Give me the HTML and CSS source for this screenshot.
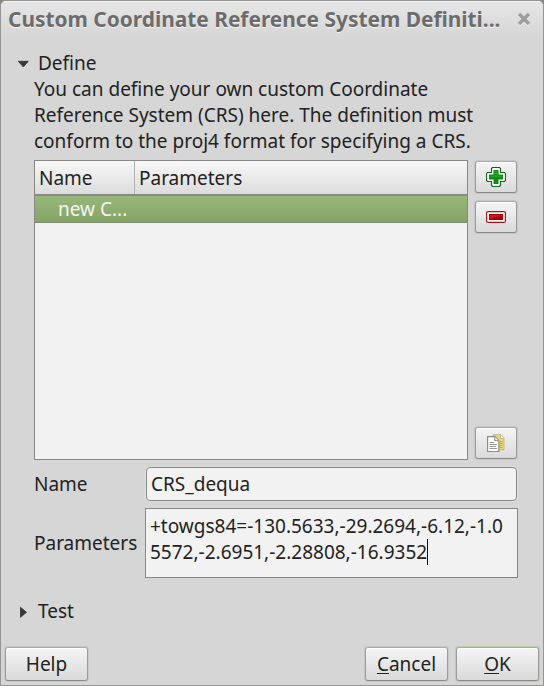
FILE: index.html
```html
<!DOCTYPE html>
<html lang="en">
<head>
<meta charset="utf-8">
<title>Custom Coordinate Reference System Definition</title>
<link rel="stylesheet" href="styles.css">
</head>
<body>
<div class="dialog">
  <header class="titlebar">
    <h1 class="title">Custom Coordinate Reference System Definiti...</h1>
    <svg class="close" width="14" height="14" viewBox="0 0 14 14"><path class="close-light" d="M2 3l10 10M12 3L2 13"/><path class="close-dark" d="M2 2l10 10M12 2L2 12"/></svg>
  </header>
  <main class="content">
    <div class="section-head">
      <svg class="arrow" width="12" height="12" viewBox="0 0 12 12"><path d="M.3 4.300h10L5.300 10z"/></svg>
      <span class="define-label">Define</span>
    </div>
    <p class="intro"><span class="line l1">You can define your own custom Coordinate</span><span class="line l2">Reference System (CRS) here. The definition must</span><span class="line l3">conform to the proj4 format for specifying a CRS.</span></p>
    <div class="list-area">
      <div class="table">
        <div class="thead"><span class="th th-name">Name</span><span class="th">Parameters</span></div>
        <div class="row">new C...</div>
      </div>
      <div class="tools">
        <div class="button tool">
          <svg width="20" height="20" viewBox="0 0 20 20"><path d="M6.5.5h7l1 1v4h4l1 1v7l-1 1h-4v4l-1 1h-7l-1-1v-4h-4l-1-1v-7l1-1h4v-4z" fill="#fff" stroke="#12661d" stroke-width="1.2"/><path d="M7.5 3h5v4.500H17v5h-4.500V17h-5v-4.500H3v-5h4.500z" fill="#118a13"/><path d="M8.500 4h3v4.500H16v1.500H4V8.500h4.500z" fill="#27a028"/></svg>
        </div>
        <div class="button tool">
          <svg width="20" height="20" viewBox="0 0 20 20"><rect x=".6" y="4.600" width="18.800" height="10.800" rx="1.500" fill="#fff" stroke="#a51217" stroke-width="1.200"/><path d="M3 7h14v6H3z" fill="#a90003"/><path d="M4 8h12L4 12z" fill="#c51c1f"/></svg>
        </div>
        <div class="button tool copy">
          <svg width="18" height="18" viewBox="0 0 18 18"><path d="M6 .7h8l3 3v12H6z" fill="#eddb69" stroke="#bdb791"/><path d="M13.500 1v3.500H17" fill="#fffbe0" stroke="#bdb791"/><path d="M13 7.500h2.500M13 9.500h2.500M13 11.500h2.500M13 13.500h2.500" stroke="#bca957"/><path d="M.6 2.600h7.400l3.900 3.900v11H.6z" fill="#fff" stroke="#8a8c88" stroke-width="1.200"/><path d="M7.700 2.700v4h4" fill="#eee" stroke="#8a8c88"/><path d="M2.500 8.500h4.500M2.500 10.500H10M2.500 12.500H9M2.500 14.500H10" stroke="#999b98"/></svg>
        </div>
      </div>
    </div>
    <div class="form">
      <label class="name-label">Name</label>
      <div class="input">CRS_dequa</div>
      <label class="param-label">Parameters</label>
      <div class="textarea"><span class="line">+towgs84=-130.5633,-29.2694,-6.12,-1.0</span><span class="line">5572,-2.6951,-2.28808,-16.9352<i class="caret"></i></span></div>
    </div>
    <div class="section-head test">
      <svg class="arrow" width="12" height="12" viewBox="0 0 12 12"><path d="M2.500 2.300v10L8.500 7.300z"/></svg>
      <span>Test</span>
    </div>
  </main>
  <footer class="footer">
    <div class="button action help">Help</div>
    <div class="button action"><span class="cancel-text"><span class="key">C</span>ancel</span></div>
    <div class="button action default"><span><span class="key">O</span>K</span></div>
  </footer>
</div>
</body>
</html>
```
FILE: styles.css
```css
* { box-sizing: border-box; }
body {
  margin: 0;
  background: #858585;
  font: 19px/26px "Noto Sans", sans-serif;
  color: #222;
}
.dialog {
  width: 544px;
  height: 686px;
  border: 1px solid #949494;
  border-radius: 6px 6px 0 0;
  background: #d6d6d6;
  display: flex;
  flex-direction: column;
  overflow: hidden;
}
.titlebar {
  height: 36px;
  flex: none;
  padding: 0 12px 0 7px;
  display: flex;
  align-items: center;
  justify-content: space-between;
  background: linear-gradient(#e6e6e6, #d6d6d6);
  border-top: 1px solid #f3f3f3;
}
.title {
  margin: 0 0 2px;
  font-size: 20.89px;
  line-height: 36px;
  font-weight: 700;
  color: #6c6c6c;
  text-shadow: 0 1px 0 #f4f4f4;
  white-space: nowrap;
}
.close { fill: none; stroke-width: 3.4; margin-bottom: 2px; }
.close-dark { stroke: #9c9c9c; }
.close-light { stroke: #f0f0f0; }
.content { padding: 13px 25px 0 17px; }
.section-head { display: flex; align-items: center; height: 26px; }
.arrow { width: 12px; margin-right: 8px; overflow: visible; fill: #3a3a3a; stroke: #222; stroke-width: .7; }
.intro { margin: 0 0 6px 16px; }
.line { display: block; white-space: nowrap; }
.list-area { display: flex; gap: 7px; margin-left: 16px; height: 300px; }
.table { width: 434px; border: 1px solid #888; background: #f2f2f2; }
.thead {
  display: flex;
  height: 34px;
  line-height: 34px;
  background: linear-gradient(#f8f8f8, #dcdcdc);
  border-bottom: 1px solid #8a8a8a;
}
.th { padding-left: 4px; }
.th-name { width: 100px; border-right: 1px solid #b0b0b0; }
.row {
  height: 28px;
  line-height: 27px;
  padding-left: 23px;
  color: #f5f5f5;
  background: linear-gradient(#98b879, #85a465);
  border-top: 1px solid #7f9465;
  border-bottom: 1px solid #7e8d70;
}
.tools { display: flex; flex-direction: column; gap: 8px; padding: 1px 0; }
.button {
  display: flex;
  align-items: center;
  justify-content: center;
  border: 1px solid #999;
  border-color: #aaa #9b9b9b #898989;
  border-radius: 3px;
  background: linear-gradient(#f5f5f5, #dadada);
  box-shadow: 0 0 1px 1px rgba(0, 0, 0, .07), inset 0 1px 0 #fff;
}
.tool { width: 42px; height: 32px; }
.copy { margin-top: auto; }
.form {
  display: grid;
  grid-template-columns: 111px 373px;
  grid-template-rows: 34px 70px;
  row-gap: 7px;
  align-items: center;
  margin: 7px 0 0 16px;
}
.input {
  height: 34px;
  margin: 0 1px;
  padding-left: 4px;
  line-height: 32px;
  border: 1px solid #888;
  border-radius: 4px;
  background: #f2f2f2;
  box-shadow: 0 0 1px 1px #e0e0e0;
}
.textarea {
  height: 70px;
  padding: 4px 0 0 4px;
  border: 1px solid #888;
  background: #f2f2f2;
}
.caret {
  display: inline-block;
  width: 1px;
  height: 26px;
  vertical-align: top;
  background: #111;
}
.test { margin-top: 20px; }
.footer { display: flex; gap: 8px; margin: auto 4px 4px; }
.action { width: 83px; height: 34px; }
.help { margin-right: auto; }
.default { box-shadow: 0 0 1px 1px #b9cda8, inset 0 1px 0 #fff; }
.key { text-decoration: underline; text-decoration-thickness: 1px; text-underline-offset: 2px; }
```
